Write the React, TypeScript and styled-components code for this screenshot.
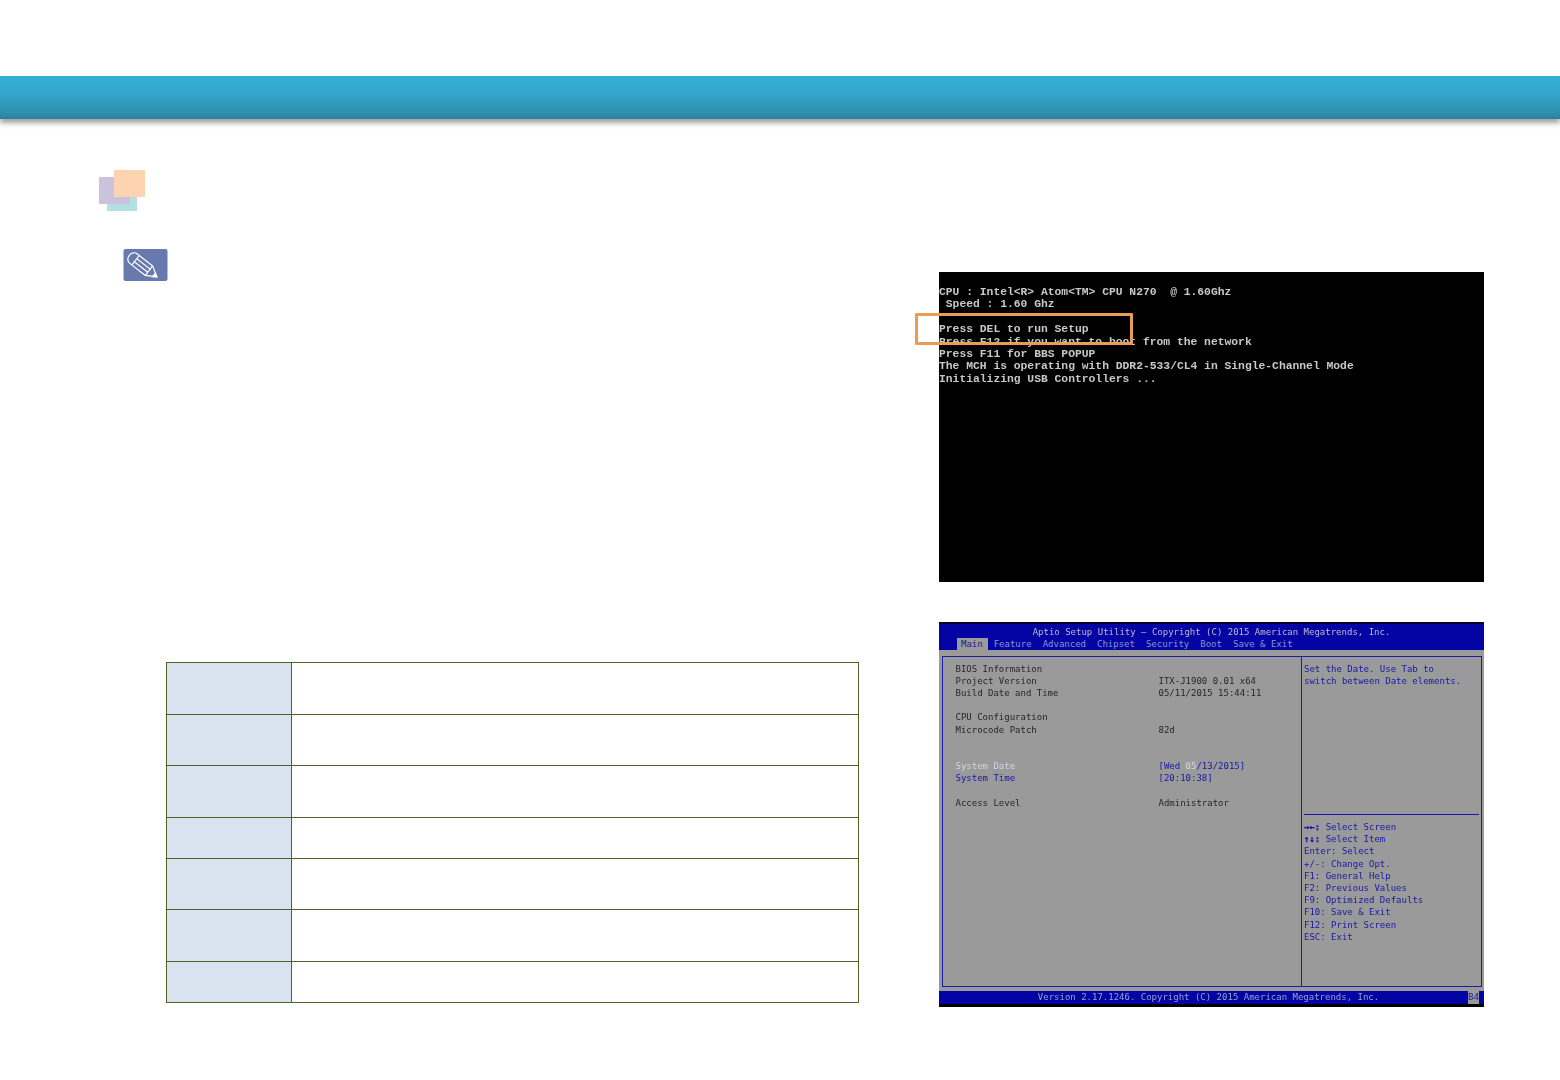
import React from "react";
import styled, { createGlobalStyle } from "styled-components";

const Global = createGlobalStyle`
  html, body { margin: 0; padding: 0; background: #fff; }
  body { font-family: "DejaVu Sans Mono", monospace; }
`;

const Page = styled.div`
  width: 1560px;
  height: 1080px;
  overflow: hidden;
  padding-top: 76px;
  box-sizing: border-box;
`;

const Banner = styled.header`
  height: 43px;
  background: linear-gradient(#35afd5 0%, #33a8cd 35%, #2d90ae 85%, #2a829c 100%);
  box-shadow: 0 4px 5px rgba(70, 70, 70, 0.5);
`;

const Main = styled.main`
  display: flex;
  padding: 51px 0 0 99px;
`;

const LeftColumn = styled.section`
  width: 760px;
  margin-right: 80px;
  display: flex;
  flex-direction: column;
`;

const RightColumn = styled.section`
  width: 545px;
  padding-top: 102px;
  display: flex;
  flex-direction: column;
  gap: 40px;
`;

const SectionMark = styled.svg`
  display: block;
  width: 46px;
  height: 41px;
`;

const NoteMark = styled.svg`
  display: block;
  width: 45px;
  height: 32px;
  margin: 38px 0 0 24px;
`;

const SpecTable = styled.table`
  width: 693px;
  margin: 381px 0 0 67px;
  border-collapse: collapse;
  table-layout: fixed;
`;

const SpecRow = styled.tr<{ $h: number }>`
  height: ${(p) => p.$h}px;
`;

const SpecHead = styled.td`
  width: 124px;
  padding: 0;
  background: #d9e3ef;
  border: 1px solid #4f6228;
`;

const SpecCell = styled.td`
  padding: 0;
  background: #fff;
  border: 1px solid #4f6228;
`;

const Terminal = styled.div`
  position: relative;
  height: 310px;
  box-sizing: border-box;
  padding-top: 14px;
  background: #000;
`;

const TerminalText = styled.pre`
  margin: 0;
  font-family: "Liberation Mono", monospace;
  font-weight: 700;
  font-size: 11.33px;
  line-height: 12.4px;
  color: #c8c8c8;
  filter: blur(0.5px);
`;

const Callout = styled.div`
  position: absolute;
  left: -24px;
  top: 41px;
  width: 212px;
  height: 26px;
  border: 3px solid #e89c55;
  border-radius: 1px;
`;

const Bios = styled.div`
  height: 385px;
  display: flex;
  flex-direction: column;
  background: #9a9a9a;
  border-top: 2px solid #050530;
  border-bottom: 3px solid #000;
  box-sizing: border-box;
  font-size: 9px;
  line-height: 12.2px;
  color: #222;
`;

const BiosHead = styled.div`
  height: 26px;
  flex: none;
  background: #0404a4;
  color: #bcbcd0;
`;

const BiosTitle = styled.div`
  text-align: center;
  padding-top: 2px;
  height: 12px;
  white-space: pre;
  filter: blur(0.4px);
`;

const TabBar = styled.div`
  display: flex;
  padding: 0 0 0 18px;
  height: 12px;
`;

const BiosTab = styled.span<{ $active?: boolean }>`
  padding: ${(p) => (p.$active ? "0 5.5px 0 4px" : "0 5.5px")};
  background: ${(p) => (p.$active ? "#9a9a9a" : "transparent")};
  color: ${(p) => (p.$active ? "#1a1a90" : "#8c94c8")};
  white-space: pre;
`;

const BiosPanel = styled.div`
  flex: 1;
  margin: 6px 2px 4px 3px;
  border: 1px solid #1c1ca8;
  display: grid;
  grid-template-columns: 359px 1fr;
  min-height: 0;
`;

const InfoPane = styled.div`
  border-right: 1px solid #1c1ca8;
  padding: 5.6px 0 0 12.5px;
  filter: blur(0.4px);
`;

const InfoRow = styled.div`
  display: grid;
  grid-template-columns: 203px 1fr;
  height: 12.2px;
  white-space: pre;
`;

const Label = styled.span<{ $tone?: "blue" | "light" }>`
  color: ${(p) => (p.$tone === "blue" ? "#1616a8" : p.$tone === "light" ? "#d4d4e4" : "#262626")};
`;

const Value = styled.span<{ $blue?: boolean }>`
  color: ${(p) => (p.$blue ? "#1616a8" : "#262626")};
`;

const Bright = styled.span`
  color: #d8d8d8;
`;

const HelpPane = styled.div`
  padding: 5.6px 2px 0 2px;
  color: #1818a4;
  white-space: pre;
`;

const HelpText = styled.div`
  filter: blur(0.4px);
`;

const HelpRule = styled.div`
  height: 1px;
  margin: 127px 0 6px 0;
  background: #1818a4;
`;

const Keys = styled.span`
  font-weight: 700;
  -webkit-text-stroke: 0.3px #1818a4;
`;

const BiosFoot = styled.div`
  height: 13px;
  flex: none;
  display: flex;
  background: #0404a4;
  color: #9aa0cc;
  padding-right: 5px;
`;

const FootText = styled.div`
  flex: 1;
  text-align: center;
  padding-left: 10px;
  white-space: pre;
  filter: blur(0.4px);
`;

const Corner = styled.div`
  width: 11px;
  background: #9a9a9a;
  color: #2020a0;
`;

const terminalLines = `CPU : Intel<R> Atom<TM> CPU N270  @ 1.60Ghz
 Speed : 1.60 Ghz

Press DEL to run Setup
Press F12 if you want to boot from the network
Press F11 for BBS POPUP
The MCH is operating with DDR2-533/CL4 in Single-Channel Mode
Initializing USB Controllers ...`;

const specRows = [52, 51, 52, 41, 51, 52, 41];
const tabs = ["Main", "Feature", "Advanced", "Chipset", "Security", "Boot", "Save & Exit"];

const keyRows: [string, string][] = [
  ["Enter:", " Select"],
  ["+/-:", " Change Opt."],
  ["F1:", " General Help"],
  ["F2:", " Previous Values"],
  ["F9:", " Optimized Defaults"],
  ["F10:", " Save & Exit"],
  ["F12:", " Print Screen"],
  ["ESC:", " Exit"],
];

export default function App() {
  return (
    <Page>
      <Global />
      <Banner />
      <Main>
        <LeftColumn>
          <SectionMark viewBox="0 0 46 41">
            <rect x="8" y="26" width="30" height="15" fill="#b5e0e2" />
            <rect x="0" y="7" width="31" height="27" fill="#c9c3de" />
            <rect x="15" y="0" width="31" height="27" fill="#fdd3b0" />
          </SectionMark>
          <NoteMark viewBox="0 0 45 32">
            <rect x="0.5" y="0" width="44" height="32" rx="2" fill="#6879ae" />
            <g transform="translate(11 10) rotate(38)" fill="none" stroke="#fff" strokeWidth="1.2">
              <path d="M0 -6 H-1 a5 6 0 0 0 0 12 H19 L29 0 L19 -6 Z" strokeLinejoin="round" />
              <path d="M2 -6 V6" />
              <path d="M2 -2 H19 M2 2 H19 M19 -6 V6" />
              <path d="M25.5 -2 L29 0 L25.5 2.5 Z" fill="#fff" />
            </g>
          </NoteMark>
          <SpecTable>
            <tbody>
              {specRows.map((h, i) => (
                <SpecRow key={i} $h={h}>
                  <SpecHead />
                  <SpecCell />
                </SpecRow>
              ))}
            </tbody>
          </SpecTable>
        </LeftColumn>
        <RightColumn>
          <Terminal>
            <TerminalText>{terminalLines}</TerminalText>
            <Callout />
          </Terminal>
          <Bios>
            <BiosHead>
              <BiosTitle>Aptio Setup Utility – Copyright (C) 2015 American Megatrends, Inc.</BiosTitle>
              <TabBar>
                {tabs.map((t, i) => (
                  <BiosTab key={t} $active={i === 0}>{t}</BiosTab>
                ))}
              </TabBar>
            </BiosHead>
            <BiosPanel>
              <InfoPane>
                <InfoRow><Label>BIOS Information</Label></InfoRow>
                <InfoRow><Label>Project Version</Label><Value>ITX-J1900 0.01 x64</Value></InfoRow>
                <InfoRow><Label>Build Date and Time</Label><Value>05/11/2015 15:44:11</Value></InfoRow>
                <InfoRow />
                <InfoRow><Label>CPU Configuration</Label></InfoRow>
                <InfoRow><Label>Microcode Patch</Label><Value>82d</Value></InfoRow>
                <InfoRow />
                <InfoRow />
                <InfoRow><Label $tone="light">System Date</Label><Value $blue>[Wed <Bright>05</Bright>/13/2015]</Value></InfoRow>
                <InfoRow><Label $tone="blue">System Time</Label><Value $blue>[20:10:38]</Value></InfoRow>
                <InfoRow />
                <InfoRow><Label>Access Level</Label><Value>Administrator</Value></InfoRow>
              </InfoPane>
              <HelpPane>
                <HelpText>
                  <div>Set the Date. Use Tab to</div>
                  <div>switch between Date elements.</div>
                </HelpText>
                <HelpRule />
                <HelpText>
                  <div><Keys>→←:</Keys> Select Screen</div>
                  <div><Keys>↑↓:</Keys> Select Item</div>
                  {keyRows.map(([k, v]) => (
                    <div key={k}>{k}{v}</div>
                  ))}
                </HelpText>
              </HelpPane>
            </BiosPanel>
            <BiosFoot>
              <FootText>Version 2.17.1246. Copyright (C) 2015 American Megatrends, Inc.</FootText>
              <Corner>B4</Corner>
            </BiosFoot>
          </Bios>
        </RightColumn>
      </Main>
    </Page>
  );
}
